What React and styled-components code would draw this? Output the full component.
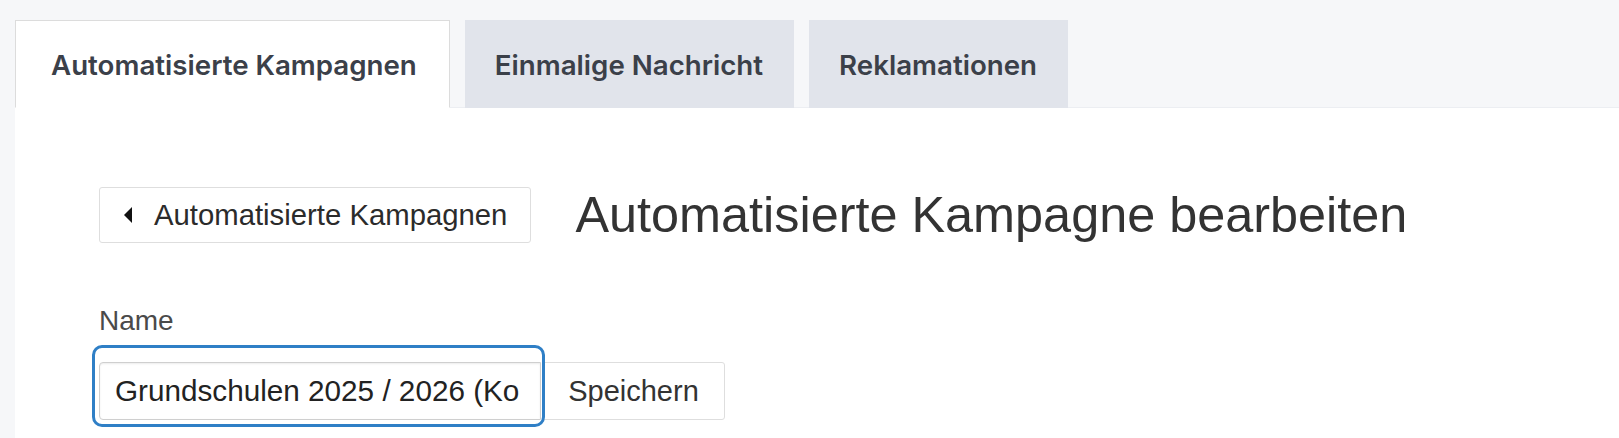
import React, { useState } from "react";
import styled, { createGlobalStyle } from "styled-components";

const GlobalStyle = createGlobalStyle`
  html, body {
    margin: 0;
    padding: 0;
    background: #f6f7f9;
    font-family: "Liberation Sans", Arial, sans-serif;
  }
  * {
    box-sizing: border-box;
  }
`;

const tabs = ["Automatisierte Kampagnen", "Einmalige Nachricht", "Reklamationen"];

const Page = styled.div`
  padding: 20px 0 0 15px;
  min-height: 438px;
  display: flex;
  flex-direction: column;
`;

const TabBar = styled.div`
  display: flex;
  gap: 15px;
  border-bottom: 1px solid #eceef2;
`;

const Tab = styled.button`
  height: 88px;
  padding: 2px ${(p) => (p.$active ? "32px 0 35px" : "30px 0 29px")};
  margin-bottom: -1px;
  display: flex;
  align-items: center;
  font-family: Inter, "Liberation Sans", sans-serif;
  font-weight: 600;
  font-size: 27.7px;
  color: #3b4049;
  cursor: pointer;
  background: ${(p) => (p.$active ? "#fff" : "#e1e4eb")};
  border: 1px solid ${(p) => (p.$active ? "#dcdcdc" : "#e1e4eb")};
  border-bottom-color: ${(p) => (p.$active ? "#fff" : "#e1e4eb")};
`;

const Panel = styled.div`
  flex: 1;
  background: #fff;
  padding: 77px 0 0 84px;
`;

const Header = styled.div`
  display: flex;
  align-items: center;
  gap: 44px;
`;

const BackButton = styled.button`
  height: 56px;
  padding: 0 23px 0 24px;
  display: flex;
  align-items: center;
  gap: 22px;
  background: #fff;
  border: 1.5px solid #dedede;
  border-radius: 3px;
  font-family: "Liberation Sans", Arial, sans-serif;
  font-size: 29.3px;
  color: #2b2b2b;
  cursor: pointer;
`;

const Caret = styled.span`
  width: 0;
  height: 0;
  border-top: 8px solid transparent;
  border-bottom: 8px solid transparent;
  border-right: 8px solid #111;
`;

const Title = styled.h1`
  margin: 0;
  font-family: "Liberation Sans", Arial, sans-serif;
  font-weight: 400;
  font-size: 50.4px;
  color: #333;
`;

const Field = styled.div`
  margin-top: 60px;
  display: flex;
  flex-direction: column;
  align-items: flex-start;
`;

const Label = styled.label`
  font-size: 28px;
  color: #4a4a4a;
  line-height: 34px;
  margin-bottom: 24px;
`;

const InputGroup = styled.div`
  display: flex;
`;

const InputWrap = styled.div`
  position: relative;
  display: flex;
`;

const FocusRing = styled.span`
  position: absolute;
  top: -17px;
  bottom: -7px;
  left: -7px;
  right: -4px;
  border: 3px solid #2f7fc6;
  border-radius: 10px;
  pointer-events: none;
`;

const TextInput = styled.input`
  width: 442px;
  height: 58px;
  padding: 0 17px 0 15px;
  border: 1.5px solid #cfcfcf;
  border-radius: 4px 0 0 4px;
  box-shadow: inset 0 1px 2px rgba(0, 0, 0, 0.08);
  font-family: "Liberation Sans", Arial, sans-serif;
  font-size: 29.7px;
  color: #222;
  outline: none;
`;

const SaveButton = styled.button`
  width: 183px;
  height: 58px;
  margin-left: 1px;
  background: #fff;
  border: 1.5px solid #dedede;
  border-radius: 0 3px 3px 0;
  font-family: "Liberation Sans", Arial, sans-serif;
  font-size: 29px;
  color: #333;
  cursor: pointer;
`;

export default function App() {
  const [active, setActive] = useState(0);
  const [name, setName] = useState("Grundschulen 2025 / 2026 (Ko");

  return (
    <>
      <GlobalStyle />
      <Page>
        <TabBar>
          {tabs.map((t, i) => (
            <Tab key={t} $active={i === active} onClick={() => setActive(i)}>
              {t}
            </Tab>
          ))}
        </TabBar>
        <Panel>
          <Header>
            <BackButton>
              <Caret />
              Automatisierte Kampagnen
            </BackButton>
            <Title>Automatisierte Kampagne bearbeiten</Title>
          </Header>
          <Field>
            <Label htmlFor="name">Name</Label>
            <InputGroup>
              <InputWrap>
                <TextInput
                  id="name"
                  value={name}
                  onChange={(e) => setName(e.target.value)}
                />
                <FocusRing />
              </InputWrap>
              <SaveButton>Speichern</SaveButton>
            </InputGroup>
          </Field>
        </Panel>
      </Page>
    </>
  );
}
